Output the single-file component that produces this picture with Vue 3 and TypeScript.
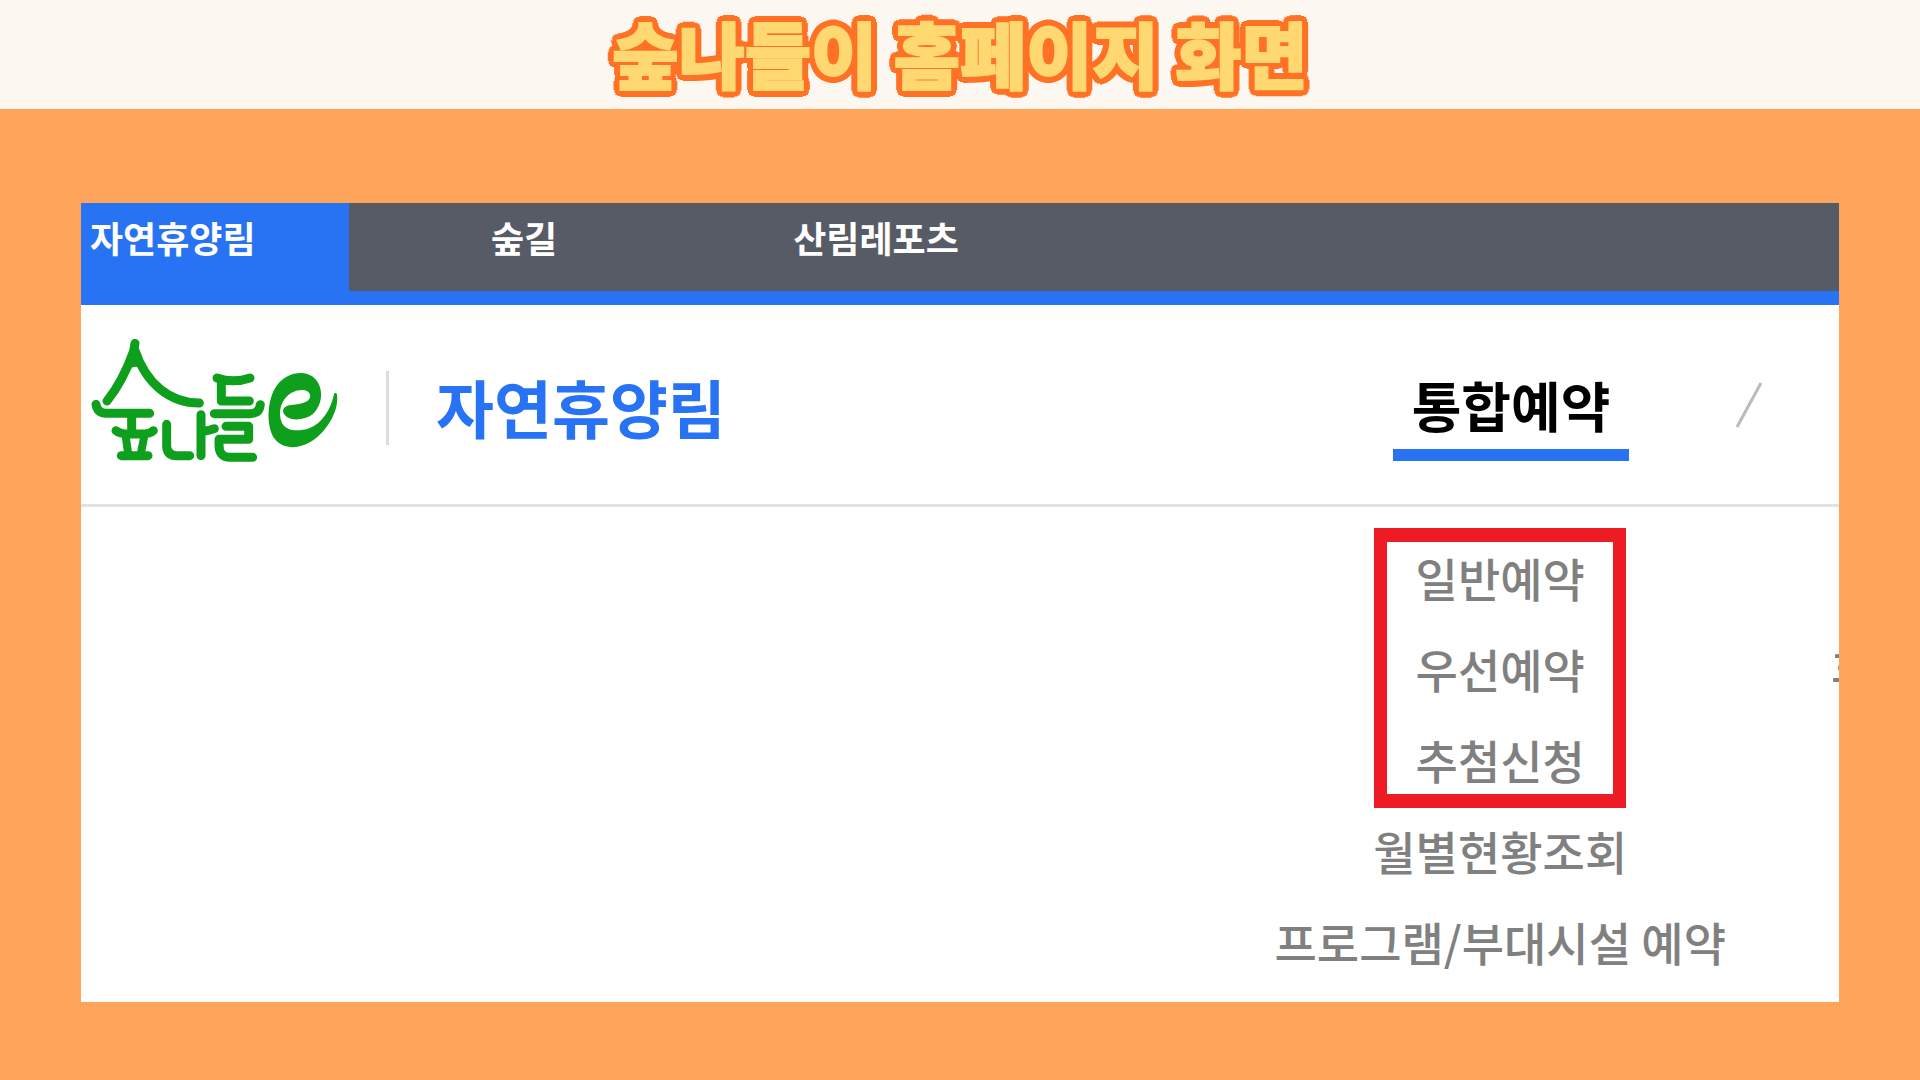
<script setup lang="ts">
interface Link {
  label: string
  href: string
}

const tabs: Link[] = [
  { label: '자연휴양림', href: '#forest' },
  { label: '숲길', href: '#trail' },
  { label: '산림레포츠', href: '#sports' },
]

const highlighted: Link[] = [
  { label: '일반예약', href: '#general' },
  { label: '우선예약', href: '#priority' },
  { label: '추첨신청', href: '#lottery' },
]

const others: Link[] = [
  { label: '월별현황조회', href: '#monthly' },
  { label: '프로그램/부대시설 예약', href: '#program' },
]
</script>

<template>
  <div class="page">
    <header class="banner">
      <h1 class="banner-title">숲나들이 홈페이지 화면</h1>
    </header>

    <main class="stage">
      <div class="panel">
        <nav class="tabs" aria-label="서비스">
          <a
            v-for="(tab, i) in tabs"
            :key="tab.href"
            :href="tab.href"
            class="tab"
            :class="{ active: i === 0 }"
          >{{ tab.label }}</a>
        </nav>

        <div class="site-head">
          <a class="logo" href="#home" aria-label="숲나들e">
            <svg viewBox="33 50 744 381" width="248" height="127" fill="none" stroke="#0ea01c" stroke-width="27" stroke-linecap="round" stroke-linejoin="round" aria-hidden="true">
              <path d="M165 69 L161 92 C143 142 117 198 81 242" />
              <path d="M165 90 C198 190 270 248 358 248" />
              <path d="M155 98 L174 98 L183 140 Q161 128 142 145 Z" fill="#0ea01c" stroke-width="8" />
              <path d="M48 252 Q52 278 78 279 H209" />
              <path d="M155 282 V328" />
              <path d="M108 331 Q120 341 145 341 H185 Q210 341 220 331" />
              <path d="M137 347 L144 397 M193 347 L183 397" stroke-width="24" />
              <path d="M124 406 H204" />
              <path d="M260 312 V378 Q262 406 290 406 H329" />
              <path d="M363 283 V406 M370 333 Q388 331 403 325" />
              <path d="M411 173 Q460 190 510 173" />
              <path d="M424 182 V236 M424 242 H508" />
              <path d="M403 280 H510 Q538 280 541 253" />
              <path d="M438 318 H506 V357 H417 V374 Q417 411 450 411 H518" />
              <path
                d="M609 273 C610 258 622 255 640 253 C676 250 693 240 690 224 C687 205 655 204 632 219 C602 239 592 278 606 308 C618 332 653 335 688 324 C727 309 752 268 762 222 C763 217 770 217 771 223 C777 268 747 319 712 350 C673 384 615 394 585 357 C557 320 560 237 590 196 C620 154 678 146 706 176 C733 207 727 255 698 282 C669 304 616 304 609 273 Z"
                fill="#0ea01c"
                stroke="none"
              />
            </svg>
          </a>
          <a class="section-name" href="#forest">자연휴양림</a>
          <a class="primary" href="#booking">통합예약</a>
          <svg class="slash" viewBox="0 0 28 48" width="28" height="48" aria-hidden="true">
            <path d="M2 46 L26 2" stroke="#bbbbbb" stroke-width="3" />
          </svg>
        </div>

        <div class="submenu">
          <nav class="column" aria-label="통합예약">
            <div class="marked">
              <a v-for="item in highlighted" :key="item.href" :href="item.href" class="item">{{ item.label }}</a>
            </div>
            <a v-for="item in others" :key="item.href" :href="item.href" class="item">{{ item.label }}</a>
          </nav>
          <div class="next-column">
            <a class="item" href="#next">후</a>
          </div>
        </div>
      </div>
    </main>
  </div>
</template>

<style>
body {
  margin: 0;
  background: #ffa45b;
}
</style>

<style scoped>
.page {
  min-height: 100vh;
  background: #ffa45b;
  font-family: "Noto Sans CJK KR", "Noto Sans", sans-serif;
}

a {
  color: inherit;
  text-decoration: none;
  white-space: nowrap;
}

.banner {
  height: 109px;
  background: #fcf7f0;
  display: flex;
  justify-content: center;
}

.banner-title {
  margin: 0;
  font-size: 72px;
  line-height: 104px;
  font-weight: 900;
  white-space: nowrap;
  color: #ffd872;
  -webkit-text-stroke: 2px #ffd872;
  text-shadow:
    7px 0 #ff7124, -7px 0 #ff7124, 0 7px #ff7124, 0 -7px #ff7124,
    5px 5px #ff7124, -5px 5px #ff7124, 5px -5px #ff7124, -5px -5px #ff7124,
    6px 3px #ff7124, -6px 3px #ff7124, 6px -3px #ff7124, -6px -3px #ff7124,
    3px 6px #ff7124, -3px 6px #ff7124, 3px -6px #ff7124, -3px -6px #ff7124,
    3px 0 #ff7124, -3px 0 #ff7124, 0 3px #ff7124, 0 -3px #ff7124;
}

.stage {
  padding: 94px 81px 78px;
}

.panel {
  background: #fff;
  overflow: hidden;
}

.tabs {
  display: flex;
  height: 88px;
  background: #575b66;
  border-bottom: 14px solid #2873f3;
  color: #fff;
  font-size: 36px;
  font-weight: 700;
  line-height: 68px;
}

.tab {
  box-sizing: border-box;
  width: 302px;
  text-align: center;
}

.tab.active {
  width: 268px;
  height: 102px;
  padding-left: 9px;
  text-align: left;
  background: #2873f3;
}

.tab:nth-child(2) {
  width: 350px;
}

.tab:nth-child(3) {
  width: 354px;
}

.site-head {
  display: flex;
  align-items: flex-start;
  height: 199px;
  padding-left: 10px;
  border-bottom: 3px solid #e2e2e2;
}

.logo {
  margin-top: 32px;
}

.logo svg {
  display: block;
}

.section-name {
  margin-top: 66px;
  margin-left: 47px;
  padding-left: 47px;
  border-left: 3px solid #dddddd;
  color: #2873f3;
  font-size: 63px;
  font-weight: 700;
  height: 74px;
  line-height: 70px;
}

.primary {
  box-sizing: border-box;
  width: 236px;
  height: 92px;
  margin-top: 64px;
  margin-left: auto;
  border-bottom: 12px solid #2873f3;
  color: #000;
  font-size: 54px;
  font-weight: 700;
  line-height: 72px;
  text-align: center;
}

.slash {
  margin: 76px 76px 0 106px;
}

.submenu {
  display: flex;
  justify-content: flex-end;
  padding: 25px 0 15px;
  color: #808080;
  font-size: 46px;
  font-weight: 500;
  line-height: 91px;
}

.column {
  display: flex;
  flex-direction: column;
  align-items: center;
}

.marked {
  position: relative;
  display: flex;
  flex-direction: column;
  align-items: center;
  width: 252px;
}

.marked::after {
  content: "";
  position: absolute;
  inset: -4px 0 -3px;
  border: 14px solid #ed1c24;
  border-width: 14px 13px;
  pointer-events: none;
}

.next-column {
  width: 8px;
  margin-left: 105px;
  padding-top: 91px;
  overflow: hidden;
}
</style>
